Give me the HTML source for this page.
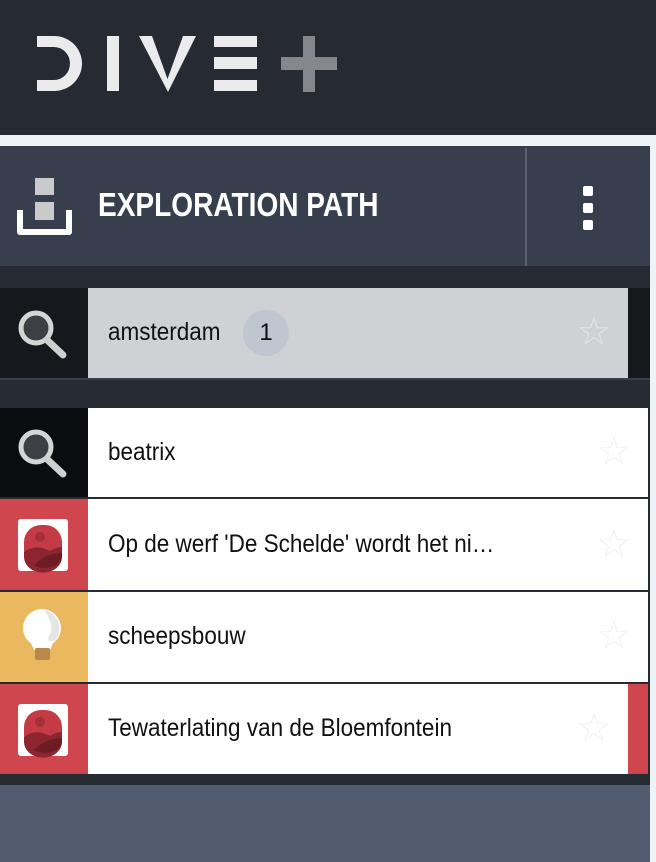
<!DOCTYPE html>
<html><head><style>
*{margin:0;padding:0;box-sizing:border-box}
body{width:656px;height:862px;background:#eef3f6;font-family:"Liberation Sans",sans-serif;position:relative;overflow:hidden}
.abs{position:absolute}
.t{position:absolute;left:108px;font-size:25px;color:#111;transform:scaleX(0.9);transform-origin:left center;white-space:nowrap}
.star{position:absolute;font-size:40px;color:#f2f2f2;line-height:1}
</style></head><body>
<div class="abs" style="left:0;top:0;width:656px;height:135px;background:#252a33"></div>
<svg class="abs" style="left:0;top:0" width="360" height="100">
<path d="M37 36 H54 A28 27.5 0 0 1 54 91 H37 V80 H54 A16 16.5 0 0 0 54 47 H37 Z" fill="#ebebeb"/>
<rect x="107" y="36" width="12" height="55" fill="#ebebeb"/>
<path d="M139 36 H152 L167.5 79 L183 36 H196 L168 92 Z" fill="#ebebeb"/>
<rect x="214" y="36" width="43" height="11" fill="#ebebeb"/>
<rect x="214" y="57" width="43" height="12" fill="#ebebeb"/>
<rect x="214" y="80" width="43" height="11" fill="#ebebeb"/>
<rect x="303" y="36" width="12" height="56" fill="#85878d"/>
<rect x="281" y="57" width="56" height="13" fill="#85878d"/>
</svg>
<div class="abs" style="left:0;top:146px;width:650px;height:120px;background:#373e4e"></div>
<div class="abs" style="left:525px;top:148px;width:2px;height:120px;background:#5a6070"></div>
<svg class="abs" style="left:16px;top:176px" width="58" height="62">
<rect x="19" y="2" width="19" height="17" fill="#cacaca"/>
<rect x="19" y="26" width="19" height="18" fill="#cacaca"/>
<path d="M4 34 V56 H53 V34" stroke="#fff" stroke-width="6" fill="none" stroke-linejoin="round"/>
</svg>
<div class="abs" style="left:98px;top:186px;font-size:33px;font-weight:bold;color:#fff;transform:scaleX(0.85);transform-origin:left top;white-space:nowrap">EXPLORATION PATH</div>
<div class="abs" style="left:583px;top:186px;width:10px;height:10px;background:#fff;border-radius:2px"></div>
<div class="abs" style="left:583px;top:203px;width:10px;height:10px;background:#fff;border-radius:2px"></div>
<div class="abs" style="left:583px;top:220px;width:10px;height:10px;background:#fff;border-radius:2px"></div>
<div class="abs" style="left:0;top:266px;width:650px;height:519px;background:#252a33"></div>
<div class="abs" style="left:0;top:288px;width:650px;height:90px;background:#16181d"></div>
<div class="abs" style="left:88px;top:288px;width:540px;height:90px;background:#cfd1d5"></div>
<div class="abs" style="left:0;top:378px;width:650px;height:2px;background:#3a3f4c"></div>
<div class="t" style="top:318px">amsterdam</div>
<div class="abs" style="left:243px;top:310px;width:46px;height:46px;border-radius:50%;background:#c0c6cf;font-size:24px;text-align:center;line-height:46px;color:#111">1</div>
<div class="star" style="left:576px;top:312px;color:#e2e3e5">☆</div>
<svg class="abs" style="left:14px;top:305px" width="60" height="60"><circle cx="22" cy="23" r="15" fill="#3d3f45" stroke="#d5d5d5" stroke-width="5"/><path d="M33 35 L49 50" stroke="#cfcfcf" stroke-width="7" stroke-linecap="round"/></svg>
<div class="abs" style="left:0;top:408px;width:88px;height:89px;background:#0b0c10"></div>
<div class="abs" style="left:88px;top:408px;width:560px;height:89px;background:#fff"></div>
<svg class="abs" style="left:14px;top:424px" width="60" height="60"><circle cx="22" cy="23" r="15" fill="#3d3f45" stroke="#d5d5d5" stroke-width="5"/><path d="M33 35 L49 50" stroke="#cfcfcf" stroke-width="7" stroke-linecap="round"/></svg>
<div class="t" style="top:438px">beatrix</div>
<div class="star" style="left:596px;top:432px">☆</div>
<div class="abs" style="left:0;top:499px;width:88px;height:91px;background:#cf464f"></div>
<div class="abs" style="left:88px;top:499px;width:560px;height:91px;background:#fff"></div>
<svg class="abs" style="left:16px;top:517px" width="54" height="56"><rect x="2" y="2" width="50" height="52" rx="3" fill="#fff"/><rect x="8" y="8" width="38" height="42" rx="17" fill="#c43a45"/><circle cx="24" cy="20" r="5" fill="#a52f38"/><path d="M8 35 Q20 26 34 34 Q40 30 46 30 V40 A17 14 0 0 1 8 40 Z" fill="#8c2530"/><path d="M18 48 Q30 36 46 36 V40 A17 12 0 0 1 18 48Z" fill="#6e1c24"/></svg>
<div class="t" style="top:530px">Op de werf 'De Schelde' wordt het ni…</div>
<div class="star" style="left:596px;top:524px">☆</div>
<div class="abs" style="left:0;top:592px;width:88px;height:90px;background:#e9b85f"></div>
<div class="abs" style="left:88px;top:592px;width:560px;height:90px;background:#fff"></div>
<svg class="abs" style="left:20px;top:608px" width="44" height="56"><circle cx="22" cy="20" r="19" fill="#fff"/><path d="M24 2 A19 19 0 0 1 30 37 L28 30 Q36 18 24 2Z" fill="#e5e5e5"/><path d="M10 33 H34 L30 42 H14Z" fill="#fff"/><rect x="15" y="40" width="15" height="12" rx="2" fill="#b8894a"/></svg>
<div class="t" style="top:622px">scheepsbouw</div>
<div class="star" style="left:596px;top:616px">☆</div>
<div class="abs" style="left:0;top:684px;width:88px;height:90px;background:#cf464f"></div>
<div class="abs" style="left:88px;top:684px;width:540px;height:90px;background:#fff"></div>
<div class="abs" style="left:628px;top:684px;width:20px;height:90px;background:#cf464f"></div>
<svg class="abs" style="left:16px;top:702px" width="54" height="56"><rect x="2" y="2" width="50" height="52" rx="3" fill="#fff"/><rect x="8" y="8" width="38" height="42" rx="17" fill="#c43a45"/><circle cx="24" cy="20" r="5" fill="#a52f38"/><path d="M8 35 Q20 26 34 34 Q40 30 46 30 V40 A17 14 0 0 1 8 40 Z" fill="#8c2530"/><path d="M18 48 Q30 36 46 36 V40 A17 12 0 0 1 18 48Z" fill="#6e1c24"/></svg>
<div class="t" style="top:714px">Tewaterlating van de Bloemfontein</div>
<div class="star" style="left:576px;top:708px">☆</div>
<div class="abs" style="left:0;top:785px;width:650px;height:77px;background:#525c70"></div>
</body></html>
